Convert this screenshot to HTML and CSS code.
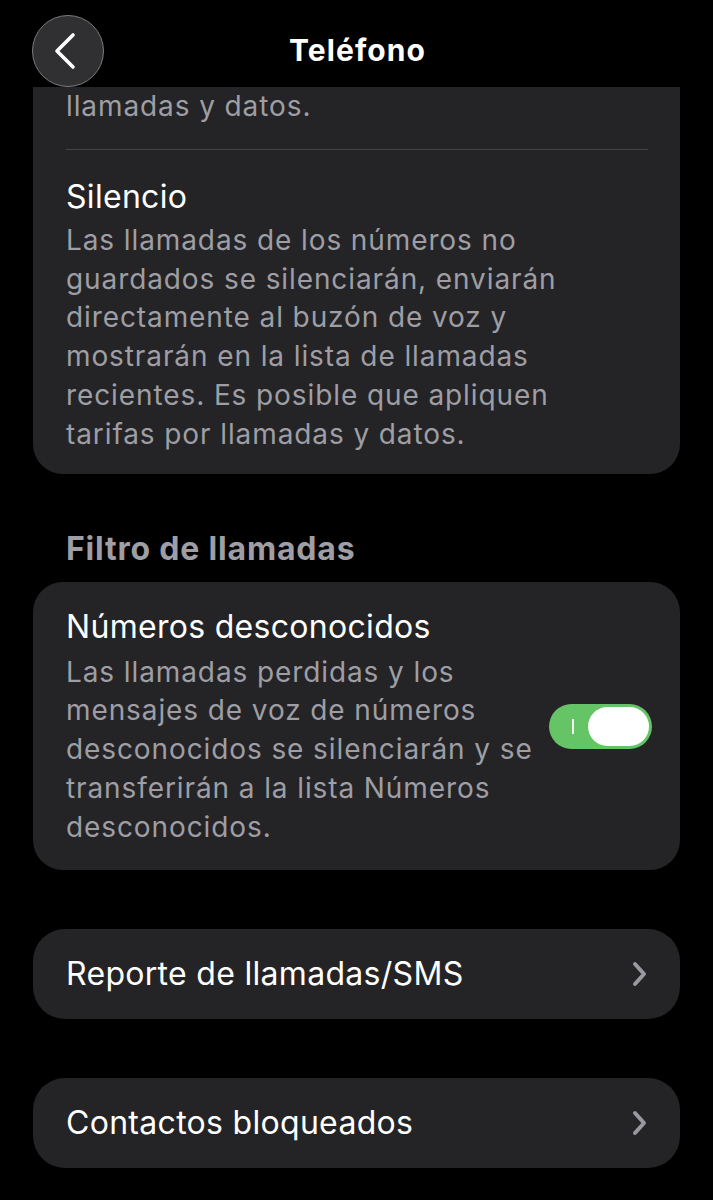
FILE: index.html
```html
<!DOCTYPE html>
<html lang="es">
<head>
<meta charset="utf-8">
<title>Teléfono</title>
<link rel="stylesheet" href="styles.css">
</head>
<body>
<header class="topbar">
  <button class="back" aria-label="Atrás">
    <svg width="26" height="38" viewBox="0 0 26 38"><path d="M21 3 L5 19 L21 35" fill="none" stroke="#fff" stroke-width="3.6" stroke-linecap="round" stroke-linejoin="round"/></svg>
  </button>
  <h1 class="title">Teléfono</h1>
</header>
<main class="content">
  <section class="card card-top">
    <p class="desc">llamadas y datos.</p>
    <div class="sep"></div>
    <h2 class="item-title">Silencio</h2>
    <p class="desc">Las llamadas de los números no<br>guardados se silenciarán, enviarán<br>directamente al buzón de voz y<br>mostrarán en la lista de llamadas<br>recientes. Es posible que apliquen<br>tarifas por llamadas y datos.</p>
  </section>

  <h3 class="section-head">Filtro de llamadas</h3>
  <section class="card card-row">
    <div class="row-text">
      <h2 class="item-title">Números desconocidos</h2>
      <p class="desc">Las llamadas perdidas y los<br>mensajes de voz de números<br>desconocidos se silenciarán y se<br>transferirán a la lista Números<br>desconocidos.</p>
    </div>
    <div class="toggle" role="switch" aria-checked="true">
      <span class="toggle-mark"></span>
      <span class="knob"></span>
    </div>
  </section>

  <section class="card card-link">
    <span class="link-label">Reporte de llamadas/SMS</span>
    <svg class="chev" width="16" height="26" viewBox="0 0 16 26"><path d="M4 3 L13 13 L4 23" fill="none" stroke="#98989f" stroke-width="4" stroke-linecap="round" stroke-linejoin="round"/></svg>
  </section>

  <section class="card card-link">
    <span class="link-label">Contactos bloqueados</span>
    <svg class="chev" width="16" height="26" viewBox="0 0 16 26"><path d="M4 3 L13 13 L4 23" fill="none" stroke="#98989f" stroke-width="4" stroke-linecap="round" stroke-linejoin="round"/></svg>
  </section>
</main>
</body>
</html>
```
FILE: styles.css
```css
* { box-sizing: border-box; }
html, body {
  margin: 0;
  padding: 0;
  background: #000;
}
body {
  width: 713px;
  height: 1200px;
  overflow: hidden;
  font-family: Inter, "Noto Sans", "Liberation Sans", sans-serif;
  color: #fff;
}
.topbar {
  height: 87px;
  display: flex;
  align-items: center;
  justify-content: center;
  position: relative;
}
.back {
  position: absolute;
  left: 32px;
  top: 15px;
  width: 72px;
  height: 72px;
  border-radius: 50%;
  background: #303032;
  border: 1.5px solid #7c7c7e;
  display: flex;
  align-items: center;
  justify-content: center;
  padding: 0 6px 0 0;
}
.title {
  margin: 0;
  font-size: 30px;
  font-weight: 700;
  letter-spacing: 1.1px;
  line-height: 40px;
  padding-left: 2px;
  padding-top: 12px;
}
.content {
  padding: 0 33px;
  display: flex;
  flex-direction: column;
}
.card {
  background: #242426;
  border-radius: 30px;
}
.card-top {
  border-radius: 0 0 30px 30px;
  padding: 0 33px 20px 33px;
}
.desc {
  margin: 0;
  font-size: 28px;
  line-height: 38.8px;
  color: #9e9ea4;
  letter-spacing: 0.9px;
  white-space: nowrap;
}
.sep {
  height: 1px;
  background: #444446;
  margin: 23px 0 27px 0;
  width: 582px;
}
.item-title {
  margin: 0 0 4px 0;
  font-size: 32px;
  font-weight: 400;
  line-height: 40px;
  letter-spacing: 0.3px;
}
.section-head {
  margin: 55px 0 13px 33px;
  font-size: 32px;
  font-weight: 700;
  line-height: 40px;
  letter-spacing: 0.8px;
  color: #9e9ea4;
}
.card-row {
  display: flex;
  align-items: center;
  padding: 25px 28px 23px 33px;
}
.row-text {
  width: 480px;
  flex: none;
}
.row-text .item-title { margin-bottom: 6px; }
.toggle {
  margin-left: auto;
  width: 103px;
  height: 45px;
  border-radius: 23px;
  background: #65c466;
  position: relative;
}
.toggle-mark {
  position: absolute;
  left: 23px;
  top: 15px;
  width: 2px;
  height: 15px;
  background: #f2f2f2;
}
.knob {
  position: absolute;
  right: 3px;
  top: 3px;
  width: 61px;
  height: 39px;
  border-radius: 20px;
  background: #fff;
}
.card-link {
  margin-top: 59px;
  height: 90px;
  display: flex;
  align-items: center;
  justify-content: space-between;
  padding: 0 33px 0 33px;
  border-radius: 32px;
}
.link-label {
  font-size: 32px;
  line-height: 40px;
  letter-spacing: 0.3px;
}
.chev { display: block; }
```
